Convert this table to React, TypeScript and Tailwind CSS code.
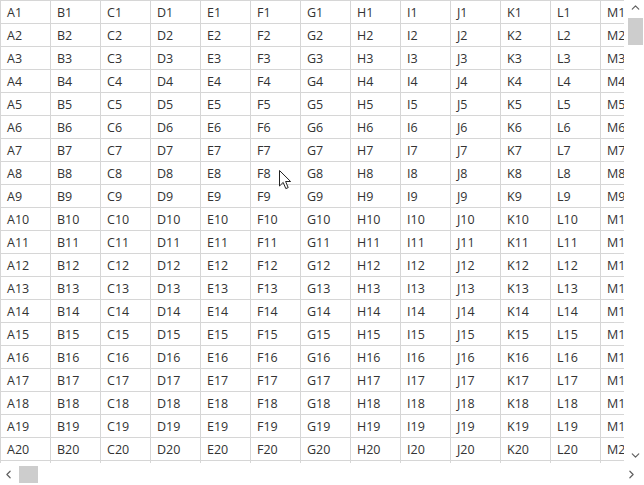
import { ChevronUp, ChevronDown, ChevronLeft, ChevronRight } from "lucide-react";

const COLS = ["A", "B", "C", "D", "E", "F", "G", "H", "I", "J", "K", "L", "M"];
const ROWS = Array.from({ length: 21 }, (_, i) => i + 1);

function Cursor() {
  return (
    <svg
      className="absolute left-[279px] top-[170px]"
      width="13"
      height="20"
      viewBox="0 0 13 20"
    >
      <path
        d="M0.5 0.5 L0.5 16 L4.2 12.4 L6.8 18.6 L9.2 17.6 L6.6 11.5 L11.6 11.5 Z"
        fill="#fff"
        stroke="#222"
        strokeWidth="1"
        strokeLinejoin="round"
      />
    </svg>
  );
}

export default function App() {
  return (
    <div className="relative h-[485px] w-[644px] overflow-hidden bg-white font-['Segoe_UI','Open_Sans',sans-serif] text-[12.5px] text-[#333]">
      <div className="flex h-[463px]">
        {/* grid */}
        <div className="h-[463px] w-[624px] overflow-hidden">
          <div className="w-max border-l border-t border-[#d6d6d6]">
            {ROWS.map((r) => (
              <div key={r} className="flex">
                {COLS.map((c) => (
                  <div
                    key={c}
                    className="flex h-[23px] w-[50px] shrink-0 items-center border-b border-r border-[#d6d6d6] pl-[6px] pt-[2px]"
                  >
                    {c}
                    {r}
                  </div>
                ))}
              </div>
            ))}
          </div>
        </div>
        {/* vertical scrollbar */}
        <div className="flex w-[20px] flex-col items-center bg-white pl-[3px]">
          <ChevronUp className="mt-[1px] size-[13px] text-[#606060]" strokeWidth={2.2} />
          <div className="mt-[4px] h-[27px] w-[15px] bg-[#cdcdcd]" />
          <div className="flex-1" />
          <ChevronDown className="mb-[1px] size-[13px] text-[#606060]" strokeWidth={2.2} />
        </div>
      </div>
      {/* horizontal scrollbar */}
      <div className="flex h-[22px] items-center bg-white pr-[6px]">
        <ChevronLeft className="ml-[2px] size-[13px] text-[#606060]" strokeWidth={2.2} />
        <div className="ml-[4px] h-[17px] w-[19px] bg-[#cdcdcd]" />
        <div className="flex-1" />
        <ChevronRight className="size-[13px] text-[#606060]" strokeWidth={2.2} />
      </div>
      <Cursor />
    </div>
  );
}
